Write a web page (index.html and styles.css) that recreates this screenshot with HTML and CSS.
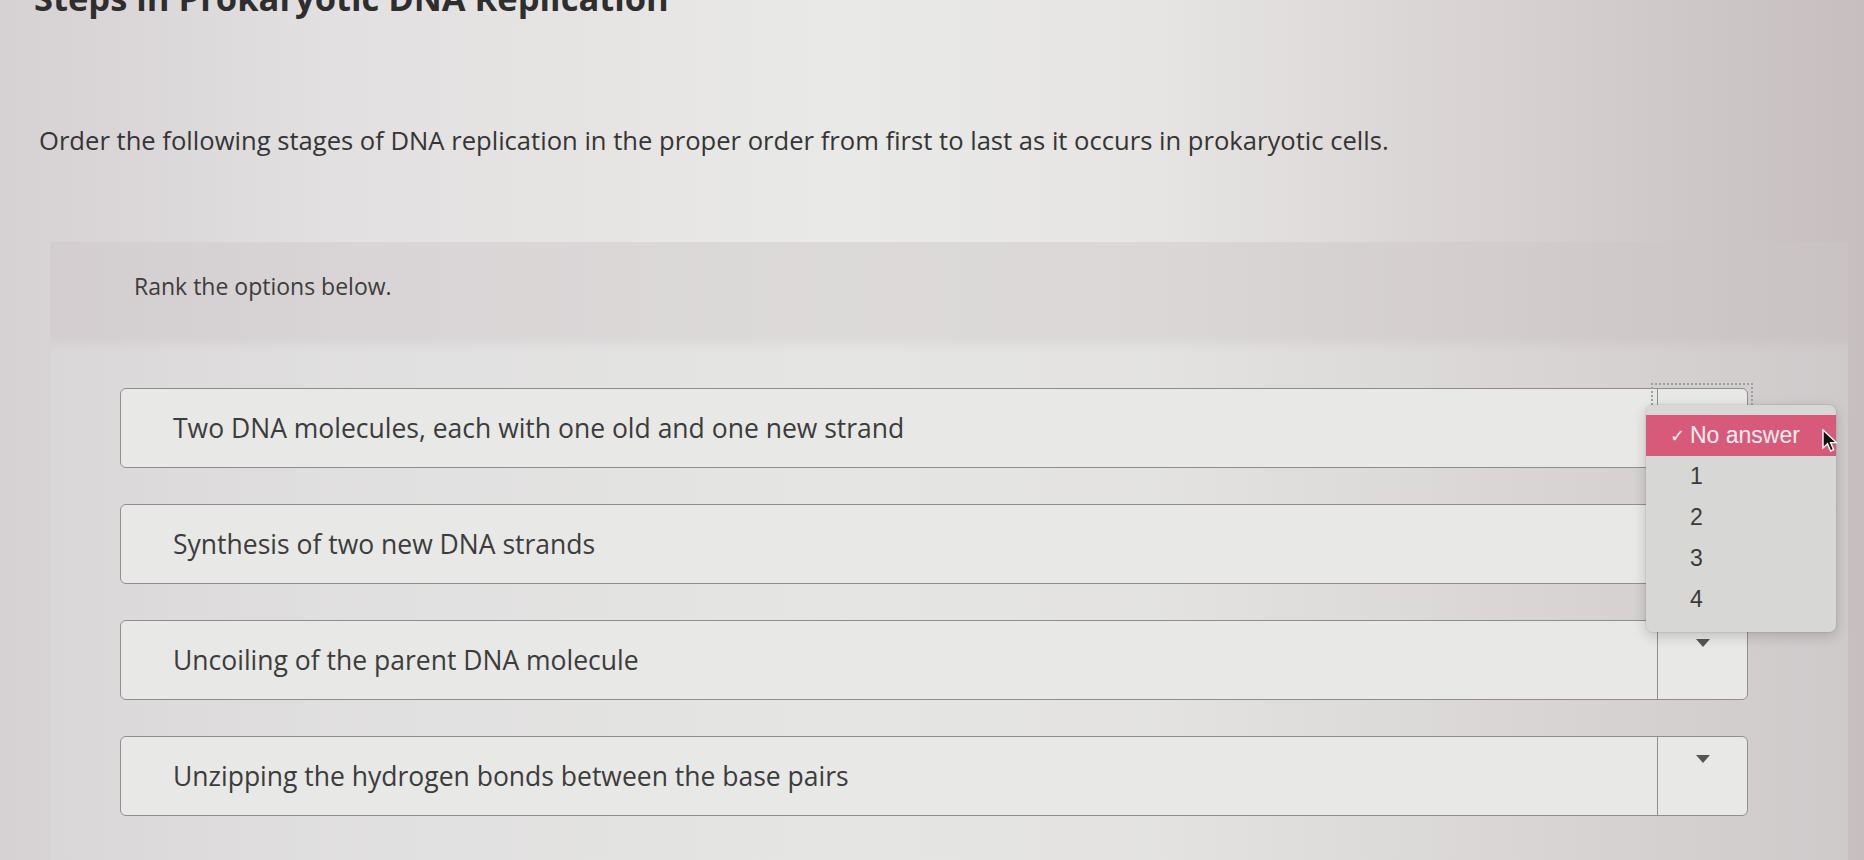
FILE: index.html
```html
<!DOCTYPE html>
<html lang="en">
<head>
<meta charset="utf-8">
<title>Steps in Prokaryotic DNA Replication</title>
<link rel="stylesheet" href="styles.css">
</head>
<body>
<div class="page">
  <h1 class="title">Steps in Prokaryotic DNA Replication</h1>
  <p class="prompt">Order the following stages of DNA replication in the proper order from first to last as it occurs in prokaryotic cells.</p>
  <section class="panel">
    <p class="rank">Rank the options below.</p>
    <div class="rows">
      <div class="row">
        <div class="row-text">Two DNA molecules, each with one old and one new strand</div>
        <div class="row-select focused">
          <svg class="caret" width="14" height="8" viewBox="0 0 14 8"><path d="M0 0H14L7 8Z"/></svg>
          <div class="popup">
            <div class="opt selected"><span class="check">✓</span>No answer</div>
            <div class="opt">1</div>
            <div class="opt">2</div>
            <div class="opt">3</div>
            <div class="opt">4</div>
          </div>
          <svg class="cursor" width="16" height="24" viewBox="0 0 16 24"><path d="M1 1V19L5.5 14.8L8.6 22L11.6 20.7L8.6 13.6H14.4Z"/></svg>
        </div>
      </div>
      <div class="row">
        <div class="row-text">Synthesis of two new DNA strands</div>
        <div class="row-select">
          <svg class="caret" width="14" height="8" viewBox="0 0 14 8"><path d="M0 0H14L7 8Z"/></svg>
        </div>
      </div>
      <div class="row">
        <div class="row-text">Uncoiling of the parent DNA molecule</div>
        <div class="row-select">
          <svg class="caret" width="14" height="8" viewBox="0 0 14 8"><path d="M0 0H14L7 8Z"/></svg>
        </div>
      </div>
      <div class="row">
        <div class="row-text">Unzipping the hydrogen bonds between the base pairs</div>
        <div class="row-select">
          <svg class="caret" width="14" height="8" viewBox="0 0 14 8"><path d="M0 0H14L7 8Z"/></svg>
        </div>
      </div>
    </div>
  </section>
</div>
</body>
</html>
```
FILE: styles.css
```css
html, body {
  margin: 0;
  padding: 0;
  height: 100%;
  overflow: hidden;
}

body {
  font-family: "Open Sans", "Liberation Sans", sans-serif;
  color: #3a3a3a;
  background: linear-gradient(90deg, #d6d1d3 0%, #e2e0e0 18%, #e9e9e7 45%, #e6e5e3 62%, #d8d2d2 80%, #c6bebf 100%);
}

.page {
  height: 860px;
  overflow: hidden;
}

.title {
  margin: -19px 0 0 34px;
  font-size: 34.5px;
  line-height: 34px;
  font-weight: 700;
  color: #2e2e2e;
}

.prompt {
  margin: 110px 0 0 39px;
  font-size: 25.6px;
  line-height: 31px;
  color: #353535;
}

.panel {
  margin: 86px 16px 0 50px;
  padding: 30px 100px 0 0;
  height: 600px;
  background: linear-gradient(180deg, rgba(205, 198, 200, 0.45) 0px, rgba(205, 198, 200, 0.45) 95px, rgba(222, 222, 222, 0.35) 110px, rgba(222, 222, 222, 0.35) 100%);
}

.rank {
  margin: 0 0 0 84px;
  font-size: 23px;
  line-height: 28px;
  color: #3d3d3d;
}

.rows {
  margin: 88px 0 0 70px;
  display: flex;
  flex-direction: column;
  gap: 36px;
}

.row {
  display: flex;
  height: 80px;
  border: 1.5px solid #8f8f8f;
  border-radius: 6px;
  background: #e8e8e7;
  box-sizing: border-box;
}

.row-text {
  flex: 1;
  display: flex;
  align-items: center;
  padding-left: 52px;
  font-size: 26.5px;
  color: #3c3c3c;
}

.row-select {
  position: relative;
  width: 90px;
  border-left: 1.5px solid #8f8f8f;
  display: flex;
  justify-content: center;
  padding-top: 18px;
  box-sizing: border-box;
}

.caret path {
  fill: #555;
}

.focused {
  outline: 2px dotted #a0a0a0;
  outline-offset: 4px;
}

.popup {
  position: absolute;
  left: -12px;
  top: 16px;
  width: 190px;
  padding: 10px 0 12px;
  background: #d7d7d5;
  border-radius: 7px;
  box-shadow: 0 4px 14px rgba(0, 0, 0, 0.18), 0 0 0 1px rgba(0, 0, 0, 0.06);
  font-family: "Liberation Sans", Arial, sans-serif;
  font-size: 23px;
  color: #3a3a3a;
  z-index: 2;
}

.opt {
  height: 41px;
  line-height: 41px;
  padding-left: 44px;
  position: relative;
}

.opt.selected {
  background: #d85a7a;
  color: #fbeef1;
}

.check {
  position: absolute;
  left: 24px;
  font-family: "DejaVu Sans", sans-serif;
  font-size: 18px;
}

.cursor {
  position: absolute;
  left: 164px;
  top: 40px;
  z-index: 3;
}

.cursor path {
  fill: #111;
  stroke: #fff;
  stroke-width: 1.4;
}
```
